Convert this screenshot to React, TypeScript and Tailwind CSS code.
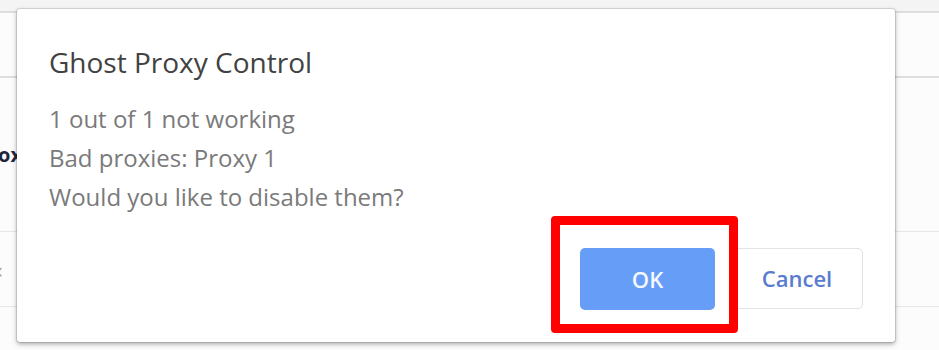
import * as React from 'react';

const bodyLines = ['1 out of 1 not working', 'Bad proxies: Proxy 1', 'Would you like to disable them?'];

export default function App() {
  return (
    <div className="relative h-[350px] w-[939px] overflow-hidden bg-white font-['Open_Sans',sans-serif]">
      {/* page behind the dialog */}
      <div className="flex h-full flex-col bg-[#fcfcfc]">
        <div className="h-[13px] border-b-2 border-[#dedede] bg-[#f4f4f4]" />
        <div className="h-[65px] border-b-2 border-[#dedede]" />
        <div className="flex h-[154px] items-center border-b border-[#e6e6e6]">
          <div className="flex w-[22px] justify-end overflow-hidden">
            <span className="text-[20px] font-bold text-[#22253a]">Prox</span>
          </div>
        </div>
        <div className="flex h-[75px] items-center border-b border-[#e6e6e6]">
          <span className="-ml-[4px] text-[22px] text-[#a0a0a0]">‹</span>
        </div>
        <div className="flex-1" />
      </div>

      {/* dialog */}
      <div className="absolute left-[17px] top-[9px] flex h-[333px] w-[878px] flex-col rounded-[3px] bg-white px-[32px] pb-[32px] pt-[35px] shadow-[0_0_0_1px_rgba(0,0,0,0.1),0_2px_5px_rgba(0,0,0,0.35)]">
        <h1 className="text-[28px] leading-[36px] text-[#424242]">Ghost Proxy Control</h1>
        <div className="mt-[19px] text-[24px] leading-[39px] text-[#7a7a7a]">
          {bodyLines.map((line) => (
            <p key={line}>{line}</p>
          ))}
        </div>
        <div className="mt-auto flex justify-end gap-[16px]">
          <button className="h-[62px] w-[135px] rounded-[5px] bg-[#669df6] text-[22px] font-semibold text-[#f4f8ff]">
            OK
          </button>
          <button className="h-[61px] w-[132px] rounded-[5px] border border-[#e1e3e6] bg-white text-[22px] font-semibold text-[#5a7ccf]">
            Cancel
          </button>
        </div>
      </div>

      {/* annotation box over the OK button */}
      <div className="absolute left-[551px] top-[216px] h-[117px] w-[187px] rounded-[4px] border-[9px] border-[#ff0000]" />
    </div>
  );
}
